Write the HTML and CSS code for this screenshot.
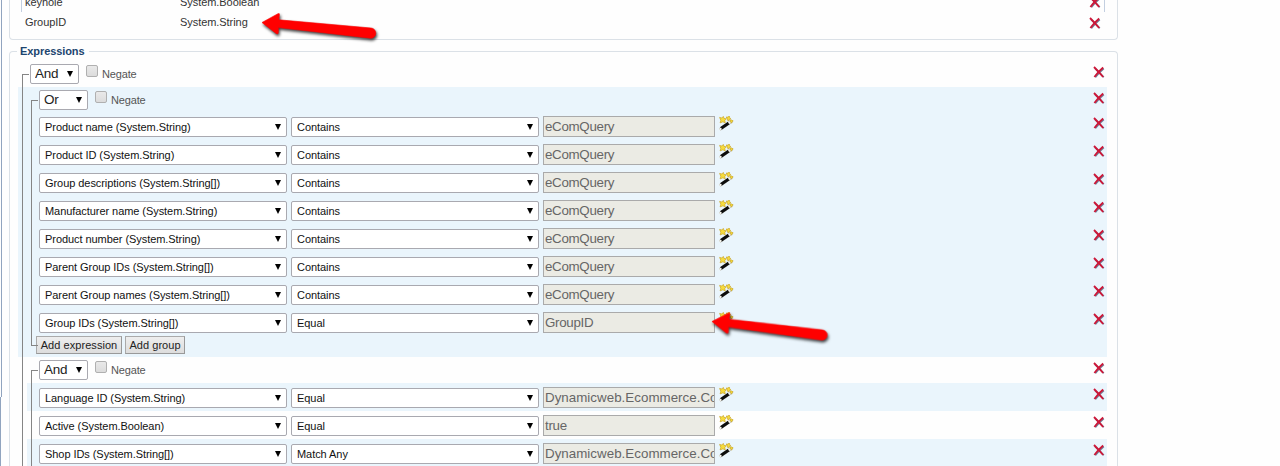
FILE: index.html
```
<!DOCTYPE html>
<html lang="en">

<head>
  <meta charset="UTF-8">
  <title>Query</title>
  <link rel="stylesheet" href="styles.css">
</head>

<body>
  <!-- shared icons -->
  <svg class="defs">
    <symbol id="remove" viewBox="0 0 12 13">
      <path d="M2.2 2.6 Q6 6 10.8 11.2 M10.8 2.6 Q6 6.5 2.4 11.4" stroke="#71839c" stroke-width="1.6" fill="none" />
      <path d="M1 1 Q5 5 10.2 11 M10.2 1.6 Q5 6 1.4 11" stroke="#cc1738" stroke-width="1.9" fill="none" />
    </symbol>
    <symbol id="wand" viewBox="0 0 15 15">
      <path d="M.6 13.6 L13 5" stroke="#b9b9b0" stroke-width="3" />
      <path d="M1.8 12.6 L9.8 7" stroke="#0c0c0c" stroke-width="3" />
      <path d="M.6 13.4 L2.4 12.2 M9.6 7.2 L11.4 5.9" stroke="#f7f7f0" stroke-width="1.8" />
      <path d="M.6 1.4 L2.8 2 4.3 .4 5 2.4 7.4 2.8 5.8 4.4 6.2 7 3.9 5.8 1.1 6.9 1.8 4.3z" fill="#f7dc3c" stroke="#c9a527" stroke-width=".7" />
      <path d="M7.2 1 L8.9 1.1 10.3 .1 10.7 1.7 11.8 3 10.2 3.5 9.1 5 8.4 3.2z M10.8 4.1 L12.6 4 14.2 4.9 13 5.7 12.5 7.2 11.5 5.8z" fill="#f7dc3c" stroke="#c9a527" stroke-width=".7" />
    </symbol>
    <symbol id="arrow" viewBox="0 0 124 36">
      <path d="M2 12.5 L18 3.7 Q19.8 3 19.4 5 L18.8 9.8 L111 18 A5.1 5.1 0 0 1 110.4 28.2 L18.3 17.6 L18.3 22.8 Q18 24.9 16.2 23.5 Z" fill="#f00" stroke="#f00" stroke-width="0.6" stroke-linejoin="round" />
    </symbol>
  </svg>

  <fieldset class="box params">
    <div class="param-list">
      <div class="param first"><span>keyhole</span><span>System.Boolean</span><svg class="remove"><use href="#remove" /></svg></div>
      <div class="param"><span>GroupID</span><span>System.String</span><svg class="remove"><use href="#remove" /></svg></div>
    </div>
  </fieldset>

  <section class="box expressions">
    <h2 class="legend">Expressions</h2>
    <div class="group root">
      <div class="row head">
        <div class="select op"><select><option>And</option></select></div>
        <label class="negate"><i></i><span>Negate</span></label>
        <svg class="remove"><use href="#remove" /></svg>
      </div>

      <div class="group shaded closed">
        <div class="row head">
          <div class="select op"><select><option>Or</option></select></div>
          <label class="negate"><i></i><span>Negate</span></label>
          <svg class="remove"><use href="#remove" /></svg>
        </div>
        <div class="row">
          <div class="select"><select><option>Product name (System.String)</option></select></div>
          <div class="select"><select><option>Contains</option></select></div>
          <div class="value">eComQuery</div>
          <svg class="wand"><use href="#wand" /></svg>
          <svg class="remove"><use href="#remove" /></svg>
        </div>
        <div class="row">
          <div class="select"><select><option>Product ID (System.String)</option></select></div>
          <div class="select"><select><option>Contains</option></select></div>
          <div class="value">eComQuery</div>
          <svg class="wand"><use href="#wand" /></svg>
          <svg class="remove"><use href="#remove" /></svg>
        </div>
        <div class="row">
          <div class="select"><select><option>Group descriptions (System.String[])</option></select></div>
          <div class="select"><select><option>Contains</option></select></div>
          <div class="value">eComQuery</div>
          <svg class="wand"><use href="#wand" /></svg>
          <svg class="remove"><use href="#remove" /></svg>
        </div>
        <div class="row">
          <div class="select"><select><option>Manufacturer name (System.String)</option></select></div>
          <div class="select"><select><option>Contains</option></select></div>
          <div class="value">eComQuery</div>
          <svg class="wand"><use href="#wand" /></svg>
          <svg class="remove"><use href="#remove" /></svg>
        </div>
        <div class="row">
          <div class="select"><select><option>Product number (System.String)</option></select></div>
          <div class="select"><select><option>Contains</option></select></div>
          <div class="value">eComQuery</div>
          <svg class="wand"><use href="#wand" /></svg>
          <svg class="remove"><use href="#remove" /></svg>
        </div>
        <div class="row">
          <div class="select"><select><option>Parent Group IDs (System.String[])</option></select></div>
          <div class="select"><select><option>Contains</option></select></div>
          <div class="value">eComQuery</div>
          <svg class="wand"><use href="#wand" /></svg>
          <svg class="remove"><use href="#remove" /></svg>
        </div>
        <div class="row">
          <div class="select"><select><option>Parent Group names (System.String[])</option></select></div>
          <div class="select"><select><option>Contains</option></select></div>
          <div class="value">eComQuery</div>
          <svg class="wand"><use href="#wand" /></svg>
          <svg class="remove"><use href="#remove" /></svg>
        </div>
        <div class="row">
          <div class="select"><select><option>Group IDs (System.String[])</option></select></div>
          <div class="select"><select><option>Equal</option></select></div>
          <div class="value">GroupID</div>
          <svg class="wand"><use href="#wand" /></svg>
          <svg class="remove"><use href="#remove" /></svg>
        </div>
        <div class="buttons">
          <button class="add-expression">Add expression</button>
          <button class="add-group">Add group</button>
        </div>
      </div>

      <div class="group last">
        <div class="row head">
          <div class="select op"><select><option>And</option></select></div>
          <label class="negate"><i></i><span>Negate</span></label>
          <svg class="remove"><use href="#remove" /></svg>
        </div>
        <div class="row odd">
          <div class="select"><select><option>Language ID (System.String)</option></select></div>
          <div class="select"><select><option>Equal</option></select></div>
          <div class="value code">Dynamicweb.Ecommerce.Co</div>
          <svg class="wand"><use href="#wand" /></svg>
          <svg class="remove"><use href="#remove" /></svg>
        </div>
        <div class="row">
          <div class="select"><select><option>Active (System.Boolean)</option></select></div>
          <div class="select"><select><option>Equal</option></select></div>
          <div class="value">true</div>
          <svg class="wand"><use href="#wand" /></svg>
          <svg class="remove"><use href="#remove" /></svg>
        </div>
        <div class="row odd">
          <div class="select"><select><option>Shop IDs (System.String[])</option></select></div>
          <div class="select"><select><option>Match Any</option></select></div>
          <div class="value code">Dynamicweb.Ecommerce.Co</div>
          <svg class="wand"><use href="#wand" /></svg>
          <svg class="remove"><use href="#remove" /></svg>
        </div>
      </div>
    </div>
  </section>

  <!-- callout arrows -->
  <svg class="callout callout-param"><use href="#arrow" /></svg>
  <svg class="callout callout-value"><use href="#arrow" /></svg>
</body>

</html>
```
FILE: styles.css
```
* {
  box-sizing: border-box;
}

body {
  height: 466px;
  margin: 0;
  padding-left: 9px;
  overflow: hidden;
  background:
    linear-gradient(#91a4bf, #91a4bf) 1px 0 / 1px 397px no-repeat,
    linear-gradient(#91a4bf, #91a4bf) 0 397px / 1px 69px no-repeat,
    #fefefe;
  color: #333;
  font: 11px/14px "Liberation Sans", Arial, sans-serif;
  letter-spacing: -.06px;
}

.defs {
  display: none;
}

.box {
  width: 1109px;
  margin: 0;
  padding: 0;
  border: 1px solid #dbe1e7;
  border-radius: 4px;
}

.params {
  height: 40px;
  border-top: 0;
  border-top-left-radius: 0;
  border-top-right-radius: 0;
}

.param-list {
  margin: 0 12px 0 11px;
}

.param {
  display: grid;
  grid-template-columns: 155px 1fr 12px;
  height: 20px;
  padding: 3px 4px 0 4px;
}

.param.first {
  height: 12px;
  padding: 0 3px 0 3px;
  border: solid #c3cfe0;
  border-width: 0 1px;
}

.param.first span {
  margin-top: -5px;
}

.param.first .remove {
  margin-top: -4px;
}

.param .remove {
  margin-top: 2px;
}

/* Expressions */
.expressions {
  height: 415px;
  margin-top: 11px;
  border-bottom: 0;
  border-bottom-left-radius: 0;
  border-bottom-right-radius: 0;
}

.legend {
  width: 72px;
  height: 14px;
  margin: -8px 0 3px 7px;
  padding-left: 3px;
  background: #fefefe;
  color: #1c456f;
  font-size: 11px;
  letter-spacing: -.08px;
}

.group {
  position: relative;
  padding-left: 12px;
}

.root {
  margin: 0 10px 0 8px;
  padding-left: 0;
}

.root > .head {
  padding-left: 12px;
}

/* tree line joining the rows of a group */
.group::before {
  content: "";
  position: absolute;
  z-index: 1;
  top: 13px;
  bottom: 0;
  left: 4px;
  width: 6px;
  border: solid #858585;
  border-width: 1px 0 0 1px;
}

.closed::before {
  bottom: 11px;
  left: 13px;
  border-bottom-width: 1px;
}

.shaded {
  height: 270px;
  padding-left: 21px;
  background: #eaf5fc;
}

.last {
  margin-left: 9px;
  padding-left: 0;
}

.row {
  display: flex;
  align-items: flex-start;
  height: 28px;
  padding: 5px 2px 0 0;
}

.last .row {
  padding-left: 12px;
}

.last .row:last-child {
  height: 27px;
}

.row.head {
  height: 26px;
  padding-top: 3px;
}

.shaded .row.head {
  height: 25px;
}

.odd {
  background: #eaf5fc;
}

.select {
  display: flex;
  align-items: center;
  width: 248px;
  height: 20px;
  margin-right: 4px;
  padding: 0 5px;
  border: 1px solid #a9a9b0;
  border-radius: 2px;
  background: #fff;
}

.select::after {
  content: "";
  border: solid transparent;
  border-width: 6px 3px 0;
  border-top-color: #000;
}

.select select {
  flex: 1;
  min-width: 0;
  padding: 0;
  border: 0;
  appearance: none;
  background: none;
  color: #111;
  font: 11px/14px "Liberation Sans", Arial, sans-serif;
  letter-spacing: -.06px;
}

.op {
  width: 49px;
  margin-right: 7px;
  padding: 0 5px 0 4px;
}

.op select {
  color: #222;
  font-size: 13.5px;
  letter-spacing: -.3px;
}

.negate {
  display: flex;
  gap: 4px;
  color: #555;
}

.negate i {
  width: 12px;
  height: 12px;
  margin-top: 1px;
  border: 1px solid #b0b0b0;
  border-radius: 2px;
  background: linear-gradient(#e9e9e9, #dcdcdc);
}

.negate span {
  margin-top: 3px;
  letter-spacing: -.15px;
}

.value {
  width: 172px;
  height: 21px;
  margin-top: -1px;
  padding: 0 1px;
  overflow: hidden;
  border: 1px solid #aaa;
  background: #ebebe4;
  color: #666;
  font-size: 13.333px;
  line-height: 19px;
  letter-spacing: -.3px;
  white-space: nowrap;
}

.value.code {
  letter-spacing: .03px;
}

.wand {
  width: 15px;
  height: 15px;
  margin: -1px 0 0 4px;
}

.remove {
  width: 12px;
  height: 13px;
}

.row .remove {
  margin-left: auto;
}

.head .remove {
  margin-top: 2px;
}

.buttons {
  display: flex;
  gap: 3px;
  margin-left: -3px;
}

.buttons button {
  height: 18px;
  padding: 0;
  border: 1px solid #aaa;
  border-right-color: #999;
  border-bottom-color: #999;
  background: linear-gradient(#eee, #ddd);
  color: #222;
  font: 11px/14px "Liberation Sans", Arial, sans-serif;
  letter-spacing: .05px;
}

.add-expression {
  width: 86px;
}

.add-group {
  width: 60px;
}

.callout {
  position: absolute;
  width: 124px;
  height: 36px;
  filter: drop-shadow(1px 2px 1.5px rgba(0, 0, 0, .75));
}

.callout-param {
  top: 10px;
  left: 260px;
}

.callout-value {
  top: 309px;
  left: 710px;
  transform: rotate(1.5deg) scaleX(1.015);
  transform-origin: 2px 12px;
}
```
